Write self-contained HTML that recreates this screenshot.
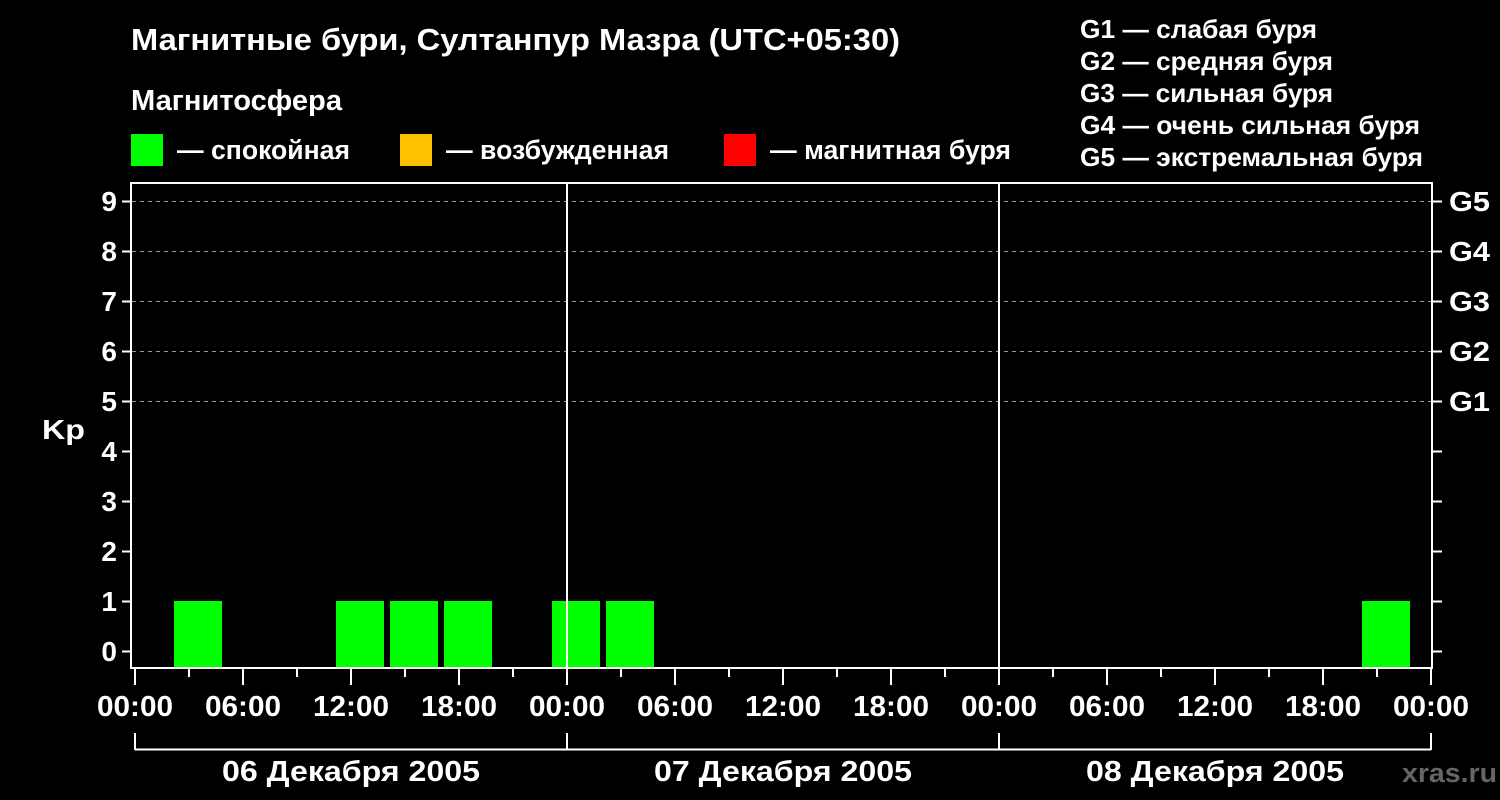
<!DOCTYPE html>
<html><head><meta charset="utf-8"><style>
html,body{margin:0;padding:0;background:#000;width:1500px;height:800px;overflow:hidden}
svg{display:block}
text{font-family:"Liberation Sans",sans-serif;font-weight:bold;fill:#fff}
</style></head><body>
<svg width="1500" height="800" viewBox="0 0 1500 800">
<text x="131" y="50" font-size="31" textLength="769" lengthAdjust="spacingAndGlyphs">Магнитные бури, Султанпур Мазра (UTC+05:30)</text>
<text x="131" y="110" font-size="29" textLength="211" lengthAdjust="spacingAndGlyphs">Магнитосфера</text>
<rect x="131" y="134" width="32" height="32" fill="#00ff00"/>
<text x="177" y="159" font-size="27" textLength="173" lengthAdjust="spacingAndGlyphs">— спокойная</text>
<rect x="400" y="134" width="32" height="32" fill="#ffc000"/>
<text x="446" y="159" font-size="27" textLength="223" lengthAdjust="spacingAndGlyphs">— возбужденная</text>
<rect x="724" y="134" width="32" height="32" fill="#ff0000"/>
<text x="770" y="159" font-size="27" textLength="241" lengthAdjust="spacingAndGlyphs">— магнитная буря</text>
<g font-size="26">
<text x="1080" y="38" textLength="237" lengthAdjust="spacingAndGlyphs">G1 — слабая буря</text>
<text x="1080" y="70" textLength="253" lengthAdjust="spacingAndGlyphs">G2 — средняя буря</text>
<text x="1080" y="102" textLength="253" lengthAdjust="spacingAndGlyphs">G3 — сильная буря</text>
<text x="1080" y="134" textLength="340" lengthAdjust="spacingAndGlyphs">G4 — очень сильная буря</text>
<text x="1080" y="166" textLength="343" lengthAdjust="spacingAndGlyphs">G5 — экстремальная буря</text>
</g>
<g stroke="#999" stroke-width="1" stroke-dasharray="4,4">
<line x1="132" y1="201.5" x2="1431" y2="201.5"/>
<line x1="132" y1="251.5" x2="1431" y2="251.5"/>
<line x1="132" y1="301.5" x2="1431" y2="301.5"/>
<line x1="132" y1="351.5" x2="1431" y2="351.5"/>
<line x1="132" y1="401.5" x2="1431" y2="401.5"/>
</g>
<g fill="#00ff00">
<rect x="174" y="601" width="48" height="66"/>
<rect x="336" y="601" width="48" height="66"/>
<rect x="390" y="601" width="48" height="66"/>
<rect x="444" y="601" width="48" height="66"/>
<rect x="552" y="601" width="48" height="66"/>
<rect x="606" y="601" width="48" height="66"/>
<rect x="1362" y="601" width="48" height="66"/>
</g>
<g stroke="#fff" stroke-width="2" fill="none">
<rect x="131" y="183" width="1301" height="485"/>
<line x1="567" y1="183" x2="567" y2="668"/>
<line x1="999" y1="183" x2="999" y2="668"/>
<path d="M122 201.5h9M122 251.5h9M122 301.5h9M122 351.5h9M122 401.5h9M122 451.5h9M122 501.5h9M122 551.5h9M122 601.5h9M122 651.5h9"/>
<path d="M1432 201.5h10M1432 251.5h10M1432 301.5h10M1432 351.5h10M1432 401.5h10M1432 451.5h10M1432 501.5h10M1432 551.5h10M1432 601.5h10M1432 651.5h10"/>
<path d="M135 669v16M243 669v16M351 669v16M459 669v16M567 669v16M675 669v16M783 669v16M891 669v16M999 669v16M1107 669v16M1215 669v16M1323 669v16M1431 669v16"/>
<path d="M189 669v8M297 669v8M405 669v8M513 669v8M621 669v8M729 669v8M837 669v8M945 669v8M1053 669v8M1161 669v8M1269 669v8M1377 669v8"/>
<path d="M135 733v17M567 733v17M999 733v17M1431 733v17M135 749.5h1296"/>
</g>
<g font-size="28" text-anchor="end">
<text x="117" y="211">9</text><text x="117" y="261">8</text><text x="117" y="311">7</text><text x="117" y="361">6</text><text x="117" y="411">5</text><text x="117" y="461">4</text><text x="117" y="511">3</text><text x="117" y="561">2</text><text x="117" y="611">1</text><text x="117" y="661">0</text>
</g>
<text x="42" y="439" font-size="28" textLength="43" lengthAdjust="spacingAndGlyphs">Kp</text>
<g font-size="28">
<text x="1449" y="211" textLength="41" lengthAdjust="spacingAndGlyphs">G5</text><text x="1449" y="261" textLength="41" lengthAdjust="spacingAndGlyphs">G4</text><text x="1449" y="311" textLength="41" lengthAdjust="spacingAndGlyphs">G3</text><text x="1449" y="361" textLength="41" lengthAdjust="spacingAndGlyphs">G2</text><text x="1449" y="411" textLength="41" lengthAdjust="spacingAndGlyphs">G1</text>
</g>
<g font-size="29">
<text x="97" y="716" textLength="76" lengthAdjust="spacingAndGlyphs">00:00</text><text x="205" y="716" textLength="76" lengthAdjust="spacingAndGlyphs">06:00</text><text x="313" y="716" textLength="76" lengthAdjust="spacingAndGlyphs">12:00</text><text x="421" y="716" textLength="76" lengthAdjust="spacingAndGlyphs">18:00</text>
<text x="529" y="716" textLength="76" lengthAdjust="spacingAndGlyphs">00:00</text><text x="637" y="716" textLength="76" lengthAdjust="spacingAndGlyphs">06:00</text><text x="745" y="716" textLength="76" lengthAdjust="spacingAndGlyphs">12:00</text><text x="853" y="716" textLength="76" lengthAdjust="spacingAndGlyphs">18:00</text>
<text x="961" y="716" textLength="76" lengthAdjust="spacingAndGlyphs">00:00</text><text x="1069" y="716" textLength="76" lengthAdjust="spacingAndGlyphs">06:00</text><text x="1177" y="716" textLength="76" lengthAdjust="spacingAndGlyphs">12:00</text><text x="1285" y="716" textLength="76" lengthAdjust="spacingAndGlyphs">18:00</text>
<text x="1393" y="716" textLength="76" lengthAdjust="spacingAndGlyphs">00:00</text>
<text x="222" y="781" textLength="258" lengthAdjust="spacingAndGlyphs">06 Декабря 2005</text>
<text x="654" y="781" textLength="258" lengthAdjust="spacingAndGlyphs">07 Декабря 2005</text>
<text x="1086" y="781" textLength="258" lengthAdjust="spacingAndGlyphs">08 Декабря 2005</text>
</g>
<text x="1402" y="782" font-size="27" textLength="95" lengthAdjust="spacingAndGlyphs" style="fill:#666">xras.ru</text>
</svg>
</body></html>
